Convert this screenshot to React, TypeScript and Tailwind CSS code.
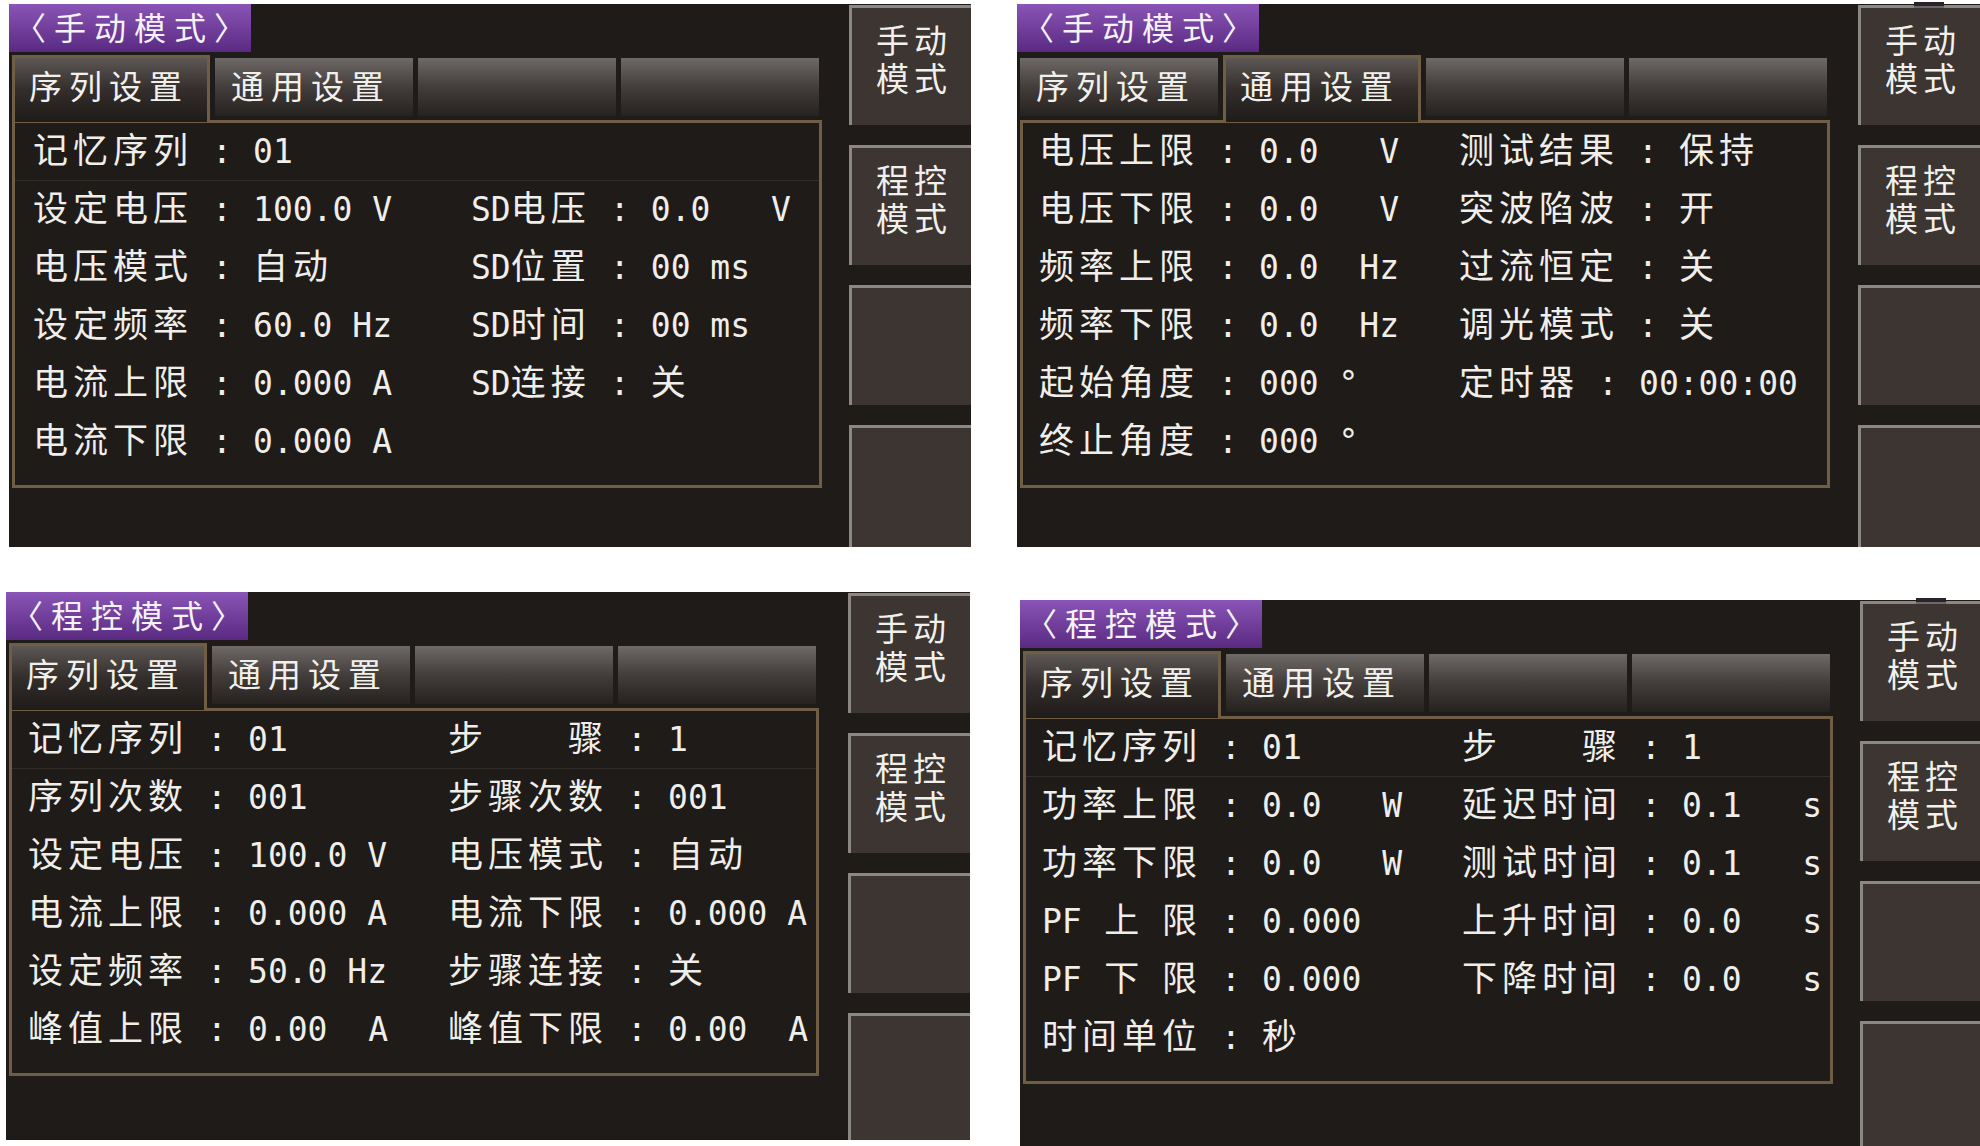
import React from "react";

type F = { l: string | string[]; v: string; u?: string };
type Row = [F | null, F | null];

const CJK_RE = /[\u2E80-\u9FFF\u3000-\u303F\uFF00-\uFFEF]/;

function runs(s: string) {
  const out: { t: string; cjk: boolean }[] = [];
  for (const ch of s) {
    const c = CJK_RE.test(ch);
    const last = out[out.length - 1];
    if (last && last.cjk === c) last.t += ch;
    else out.push({ t: ch, cjk: c });
  }
  return out;
}

function Txt({ s, tight }: { s: string; tight?: boolean }) {
  return (
    <>
      {runs(s).map((r, i) =>
        r.cjk ? (
          <span
            key={i}
            className={
              tight
                ? "font-['Noto_Sans_CJK_SC','Noto_Sans_CJK_JP',sans-serif] text-[35px] tracking-[0px] leading-none"
                : "font-['Noto_Sans_CJK_SC','Noto_Sans_CJK_JP',sans-serif] text-[35px] tracking-[5px] leading-none"
            }
          >
            {r.t}
          </span>
        ) : (
          <span
            key={i}
            className="font-['DejaVu_Sans_Mono','Liberation_Mono',monospace] text-[33px] whitespace-pre leading-none"
          >
            {r.t}
          </span>
        )
      )}
    </>
  );
}

function Field({ f }: { f: F | null }) {
  if (!f) return null;
  return (
    <div className="flex items-baseline text-[#f0eeea]">
      {Array.isArray(f.l) ? (
        <div className="flex justify-between items-baseline w-[155px] mr-[5px]">
          {f.l.map((p, i) => (
            <span key={i}>
              <Txt s={p} tight />
            </span>
          ))}
        </div>
      ) : (
        <Txt s={f.l} />
      )}
      <span className="ml-[19px] w-[20px] text-center font-['DejaVu_Sans_Mono','Liberation_Mono',monospace] text-[33px] leading-none">
        :
      </span>
      {f.u ? (
        <div className="ml-[21px] w-[140px] flex justify-between items-baseline">
          <span>
            <Txt s={f.v} />
          </span>
          <span>
            <Txt s={f.u} />
          </span>
        </div>
      ) : (
        <div className="ml-[21px]">
          <Txt s={f.v} />
        </div>
      )}
    </div>
  );
}

const TABS = ["序列设置", "通用设置", "", ""];

function Tabs({ active }: { active: number }) {
  return (
    <div className="flex items-start h-[65px] mt-[3px] pl-[3px] gap-[5px]">
      {TABS.map((t, i) =>
        i === active ? (
          <div
            key={i}
            className="relative z-10 w-[198px] h-[67px] shrink-0 border-t-[3px] border-x-[3px] border-[#6f5d44] bg-gradient-to-b from-[#5d5855] via-[#332e2b] to-[#1f1b18] flex items-start pt-[7px] pl-[14px] text-[#f2f0ec]"
          >
            <span className="font-['Noto_Sans_CJK_SC','Noto_Sans_CJK_JP',sans-serif] text-[33px] tracking-[7px] leading-[40px]">
              {t}
            </span>
          </div>
        ) : (
          <div
            key={i}
            className="mt-[3px] w-[198px] h-[58px] shrink-0 bg-gradient-to-b from-[#6e6a67] via-[#433e3b] to-[#262220] flex items-center pb-[5px] pl-[16px] text-[#f2f0ec]"
          >
            <span className="font-['Noto_Sans_CJK_SC','Noto_Sans_CJK_JP',sans-serif] text-[33px] tracking-[7px] leading-[40px]">
              {t}
            </span>
          </div>
        )
      )}
    </div>
  );
}

function SideButtons({ mark }: { mark?: boolean }) {
  const labels: [string, string][] = [
    ["手动", "模式"],
    ["程控", "模式"],
  ];
  return (
    <div className="ml-auto w-[122px] shrink-0 flex flex-col gap-[20px] pt-[1px] h-full">
      {[0, 1, 2, 3].map((i) => (
        <div
          key={i}
          className={
            (i === 3 ? "flex-1 " : "h-[120px] shrink-0 ") +
            "relative bg-[#3c3531] border-l-[3px] border-t-[3px] border-[#8b8783] flex flex-col items-center pt-[12px] pl-[5px] text-[#f2f0ec]"
          }
        >
          {mark && i === 0 && (
            <div className="absolute -top-[6px] left-[53px] w-[30px] h-[6px] bg-[#2a2429] border-b-[2px] border-[#6d6670]" />
          )}
          {labels[i] && (
            <span className="font-['Noto_Sans_CJK_SC','Noto_Sans_CJK_JP',sans-serif] text-[33px] tracking-[5px] leading-[38px] text-center">
              {labels[i][0]}
              <br />
              {labels[i][1]}
            </span>
          )}
        </div>
      ))}
    </div>
  );
}

function Panel({
  title,
  active,
  rows,
  sep,
  wide,
  mark,
  className,
}: {
  title: string;
  active: number;
  rows: Row[];
  sep: boolean;
  wide?: boolean;
  mark?: boolean;
  className: string;
}) {
  return (
    <div className={"shrink-0 flex bg-[#1f1b18] " + className}>
      <div className="w-[813px] shrink-0 flex flex-col">
        <div className="w-[242px] h-[48px] bg-gradient-to-b from-[#8a55b6] to-[#5a2a82] flex items-center pl-[5px] pb-[4px] text-[#f4f2f6]">
          <span className="font-['Noto_Sans_CJK_SC','Noto_Sans_CJK_JP',sans-serif] text-[32px] tracking-[8px] leading-[40px]">
            {title}
          </span>
        </div>
        <Tabs active={active} />
        <div className="ml-[3px] w-[810px] h-[368px] border-[3px] border-[#6f5d44] bg-[#1f1b18]">
          {rows.map((r, i) => (
            <div
              key={i}
              className={
                (wide ? "pl-[18px] " : "pl-[16px] ") +
                "flex items-center h-[58px] pb-[5px] " +
                (sep && i === 0 ? "border-b border-[#312c28]" : "")
              }
            >
              <div className={wide ? "w-[438px] shrink-0" : "w-[420px] shrink-0"}>
                <Field f={r[0]} />
              </div>
              <div>
                <Field f={r[1]} />
              </div>
            </div>
          ))}
        </div>
      </div>
      <SideButtons mark={mark} />
    </div>
  );
}

const p1: Row[] = [
  [{ l: "记忆序列", v: "01" }, null],
  [{ l: "设定电压", v: "100.0 V" }, { l: "SD电压", v: "0.0", u: "V" }],
  [{ l: "电压模式", v: "自动" }, { l: "SD位置", v: "00 ms" }],
  [{ l: "设定频率", v: "60.0 Hz" }, { l: "SD时间", v: "00 ms" }],
  [{ l: "电流上限", v: "0.000 A" }, { l: "SD连接", v: "关" }],
  [{ l: "电流下限", v: "0.000 A" }, null],
];

const p2: Row[] = [
  [{ l: "电压上限", v: "0.0", u: "V" }, { l: "测试结果", v: "保持" }],
  [{ l: "电压下限", v: "0.0", u: "V" }, { l: "突波陷波", v: "开" }],
  [{ l: "频率上限", v: "0.0", u: "Hz" }, { l: "过流恒定", v: "关" }],
  [{ l: "频率下限", v: "0.0", u: "Hz" }, { l: "调光模式", v: "关" }],
  [{ l: "起始角度", v: "000 °" }, { l: "定时器", v: "00:00:00" }],
  [{ l: "终止角度", v: "000 °" }, null],
];

const p3: Row[] = [
  [{ l: "记忆序列", v: "01" }, { l: ["步", "骤"], v: "1" }],
  [{ l: "序列次数", v: "001" }, { l: "步骤次数", v: "001" }],
  [{ l: "设定电压", v: "100.0 V" }, { l: "电压模式", v: "自动" }],
  [{ l: "电流上限", v: "0.000 A" }, { l: "电流下限", v: "0.000 A" }],
  [{ l: "设定频率", v: "50.0 Hz" }, { l: "步骤连接", v: "关" }],
  [{ l: "峰值上限", v: "0.00", u: "A" }, { l: "峰值下限", v: "0.00", u: "A" }],
];

const p4: Row[] = [
  [{ l: "记忆序列", v: "01" }, { l: ["步", "骤"], v: "1" }],
  [{ l: "功率上限", v: "0.0", u: "W" }, { l: "延迟时间", v: "0.1", u: "s" }],
  [{ l: "功率下限", v: "0.0", u: "W" }, { l: "测试时间", v: "0.1", u: "s" }],
  [{ l: ["PF", "上", "限"], v: "0.000" }, { l: "上升时间", v: "0.0", u: "s" }],
  [{ l: ["PF", "下", "限"], v: "0.000" }, { l: "下降时间", v: "0.0", u: "s" }],
  [{ l: "时间单位", v: "秒" }, null],
];

export default function App() {
  return (
    <div className="w-[1980px] h-[1146px] bg-white overflow-hidden">
      <div className="flex pt-[4px] pl-[9px]">
        <Panel title="〈手动模式〉" active={0} rows={p1} sep wide className="w-[962px] h-[543px]" />
        <Panel title="〈手动模式〉" active={1} rows={p2} sep={false} mark className="ml-[46px] w-[963px] h-[543px]" />
      </div>
      <div className="flex items-start pt-[45px] pl-[6px]">
        <Panel title="〈程控模式〉" active={0} rows={p3} sep className="w-[964px] h-[548px]" />
        <Panel title="〈程控模式〉" active={0} rows={p4} sep mark className="ml-[50px] mt-[8px] w-[962px] h-[546px]" />
      </div>
    </div>
  );
}
